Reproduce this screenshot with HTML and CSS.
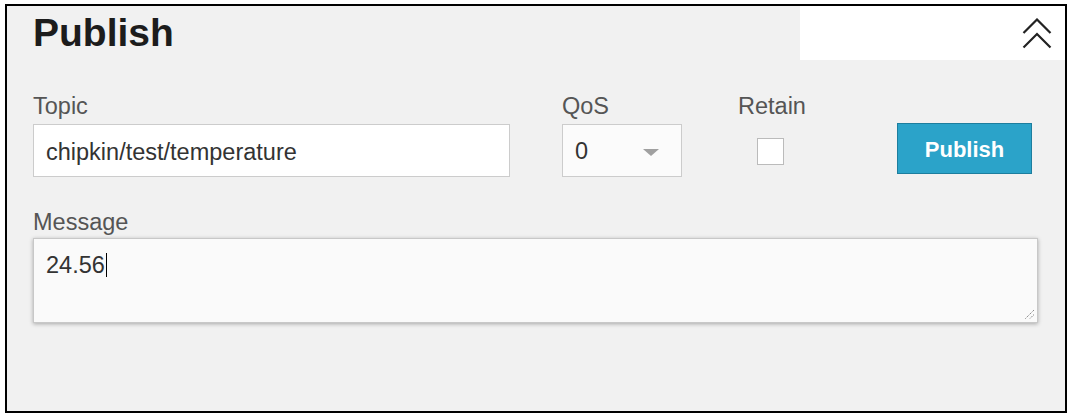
FILE: index.html
```html
<!DOCTYPE html>
<html>
<head>
<meta charset="utf-8">
<link rel="stylesheet" href="styles.css">
</head>
<body>
<div class="panel">
  <div class="header">
    <h1 class="title">Publish</h1>
    <div class="toggle">
      <svg class="chev" width="30" height="31" viewBox="0 0 30 31">
        <polyline points="1.5,15 15,1.5 28.5,15" fill="none" stroke="#222" stroke-width="2.2"/>
        <polyline points="1.5,29.5 15,16 28.5,29.5" fill="none" stroke="#222" stroke-width="2.2"/>
      </svg>
    </div>
  </div>
  <div class="row">
    <div class="field topic">
      <label class="lbl">Topic</label>
      <div class="input">chipkin/test/temperature</div>
    </div>
    <div class="field qos">
      <label class="lbl">QoS</label>
      <div class="select"><span>0</span><span class="arrow"></span></div>
    </div>
    <div class="field retain">
      <label class="lbl">Retain</label>
      <div class="check"></div>
    </div>
    <div class="field action">
      <button class="btn">Publish</button>
    </div>
  </div>
  <div class="msg">
    <label class="lbl msg-lbl">Message</label>
    <div class="textarea"><span>24.56</span><span class="caret"></span>
      <svg class="grip" width="12" height="12" viewBox="0 0 12 12">
        <line x1="11" y1="2" x2="2" y2="11" stroke="#777" stroke-width="1" stroke-dasharray="1.2 1"/>
        <line x1="11" y1="6.5" x2="6.5" y2="11" stroke="#777" stroke-width="1" stroke-dasharray="1.2 1"/>
      </svg>
    </div>
  </div>
</div>
</body>
</html>
```
FILE: styles.css
```css
* { box-sizing: border-box; }
html, body { margin: 0; padding: 0; background: #fff; }
body { font-family: "Liberation Sans", Arial, sans-serif; }

.panel {
  margin: 4px 0 0 5px;
  width: 1062px;
  height: 409px;
  border: 2px solid #000;
  background: #f1f1f1;
}

.header {
  display: flex;
  justify-content: space-between;
  height: 54px;
}
.title {
  margin: 0;
  padding-left: 26px;
  font-size: 39px;
  font-weight: bold;
  line-height: 54px;
  color: #1c1c1c;
}
.toggle {
  width: 265px;
  height: 54px;
  background: #fff;
  display: flex;
  align-items: center;
  justify-content: flex-end;
  padding-right: 13px;
}
.chev { display: block; margin-top: 1px; }

.row {
  display: flex;
  padding: 33px 0 0 26px;
}
.field { display: flex; flex-direction: column; }
.lbl {
  display: block;
  font-size: 23.5px;
  line-height: 27px;
  height: 27px;
  color: #555;
  margin-bottom: 4px;
}
.topic { width: 477px; }
.input {
  height: 53px;
  border: 1px solid #ccc;
  background: #fff;
  padding: 2px 0 0 12px;
  font-size: 23.5px;
  line-height: 51px;
  color: #333;
}
.qos { width: 120px; margin-left: 52px; }
.select {
  height: 53px;
  border: 1px solid #ccc;
  background: #fbfbfb;
  padding: 1px 0 0 12px;
  font-size: 23.5px;
  line-height: 51px;
  color: #333;
  display: flex;
  align-items: center;
}
.arrow {
  margin-left: 55px;
  width: 0; height: 0;
  border-left: 8px solid transparent;
  border-right: 8px solid transparent;
  border-top: 7px solid #a0a0a0;
  margin-top: 2px;
}
.retain { margin-left: 56px; width: 68px; align-items: flex-start; }
.check {
  margin: 14px 0 0 19px;
  width: 27px; height: 27px;
  border: 1px solid #bbb;
  background: #fff;
}
.action { margin-left: 91px; padding-top: 30px; }
.btn {
  width: 135px;
  height: 51px;
  border: 1px solid #1d7e9e;
  background: #2ba3c9;
  color: #fff;
  font-family: "Liberation Sans", Arial, sans-serif;
  font-size: 22px;
  font-weight: bold;
  padding: 3px 0 0 0;
}

.msg { padding: 32px 0 0 26px; }
.msg-lbl { margin-bottom: 2px; }
.textarea {
  position: relative;
  width: 1005px;
  height: 85px;
  border: 1px solid #c8c8c8;
  background: #fafafa;
  box-shadow: 0 1px 4px rgba(0,0,0,0.3);
  padding: 11px 0 0 12px;
  font-size: 23.5px;
  line-height: 30px;
  color: #333;
}
.caret {
  display: inline-block;
  width: 1px;
  height: 24px;
  background: #000;
  vertical-align: -4px;
  margin-left: 1px;
}
.grip { position: absolute; right: 2px; bottom: 2px; }
```
